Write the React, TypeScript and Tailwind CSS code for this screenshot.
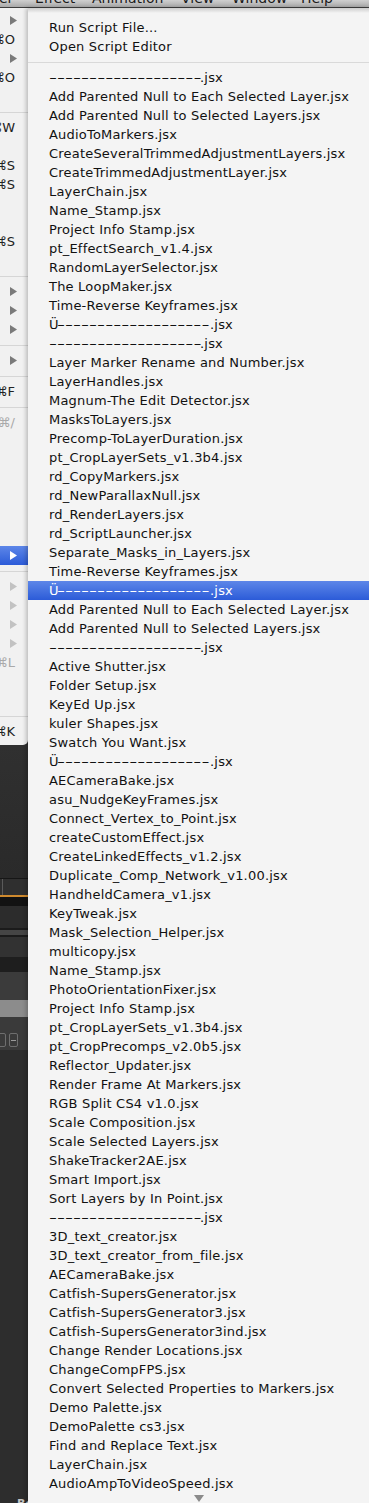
import React from 'react';

const scripts: string[] = [
  '-------------------.jsx',
  'Add Parented Null to Each Selected Layer.jsx',
  'Add Parented Null to Selected Layers.jsx',
  'AudioToMarkers.jsx',
  'CreateSeveralTrimmedAdjustmentLayers.jsx',
  'CreateTrimmedAdjustmentLayer.jsx',
  'LayerChain.jsx',
  'Name_Stamp.jsx',
  'Project Info Stamp.jsx',
  'pt_EffectSearch_v1.4.jsx',
  'RandomLayerSelector.jsx',
  'The LoopMaker.jsx',
  'Time-Reverse Keyframes.jsx',
  'Ü-------------------.jsx',
  '-------------------.jsx',
  'Layer Marker Rename and Number.jsx',
  'LayerHandles.jsx',
  'Magnum-The Edit Detector.jsx',
  'MasksToLayers.jsx',
  'Precomp-ToLayerDuration.jsx',
  'pt_CropLayerSets_v1.3b4.jsx',
  'rd_CopyMarkers.jsx',
  'rd_NewParallaxNull.jsx',
  'rd_RenderLayers.jsx',
  'rd_ScriptLauncher.jsx',
  'Separate_Masks_in_Layers.jsx',
  'Time-Reverse Keyframes.jsx',
  'Ü-------------------.jsx',
  'Add Parented Null to Each Selected Layer.jsx',
  'Add Parented Null to Selected Layers.jsx',
  '-------------------.jsx',
  'Active Shutter.jsx',
  'Folder Setup.jsx',
  'KeyEd Up.jsx',
  'kuler Shapes.jsx',
  'Swatch You Want.jsx',
  'Ü-------------------.jsx',
  'AECameraBake.jsx',
  'asu_NudgeKeyFrames.jsx',
  'Connect_Vertex_to_Point.jsx',
  'createCustomEffect.jsx',
  'CreateLinkedEffects_v1.2.jsx',
  'Duplicate_Comp_Network_v1.00.jsx',
  'HandheldCamera_v1.jsx',
  'KeyTweak.jsx',
  'Mask_Selection_Helper.jsx',
  'multicopy.jsx',
  'Name_Stamp.jsx',
  'PhotoOrientationFixer.jsx',
  'Project Info Stamp.jsx',
  'pt_CropLayerSets_v1.3b4.jsx',
  'pt_CropPrecomps_v2.0b5.jsx',
  'Reflector_Updater.jsx',
  'Render Frame At Markers.jsx',
  'RGB Split CS4 v1.0.jsx',
  'Scale Composition.jsx',
  'Scale Selected Layers.jsx',
  'ShakeTracker2AE.jsx',
  'Smart Import.jsx',
  'Sort Layers by In Point.jsx',
  '-------------------.jsx',
  '3D_text_creator.jsx',
  '3D_text_creator_from_file.jsx',
  'AECameraBake.jsx',
  'Catfish-SupersGenerator.jsx',
  'Catfish-SupersGenerator3.jsx',
  'Catfish-SupersGenerator3ind.jsx',
  'Change Render Locations.jsx',
  'ChangeCompFPS.jsx',
  'Convert Selected Properties to Markers.jsx',
  'Demo Palette.jsx',
  'DemoPalette cs3.jsx',
  'Find and Replace Text.jsx',
  'LayerChain.jsx',
  'AudioAmpToVideoSpeed.jsx',
];

const selected = 27;

type ParentRow =
  | { kind: 'arrow'; state?: 'off' | 'on' }
  | { kind: 'key'; label: string; off?: boolean }
  | { kind: 'empty' }
  | { kind: 'sep' };

const E: ParentRow = { kind: 'empty' };
const S: ParentRow = { kind: 'sep' };

const parentRows: ParentRow[] = [
  { kind: 'arrow' },
  { kind: 'key', label: '⌘O' },
  { kind: 'arrow' },
  { kind: 'key', label: '⌘O' },
  E,
  S,
  { kind: 'key', label: '⌘W' },
  E,
  { kind: 'key', label: '⌘S' },
  { kind: 'key', label: '⌘S' },
  E,
  E,
  { kind: 'key', label: '⌘S' },
  E,
  S,
  { kind: 'arrow' },
  { kind: 'arrow' },
  { kind: 'arrow' },
  S,
  { kind: 'arrow' },
  S,
  { kind: 'key', label: '⌘F' },
  S,
  { kind: 'key', label: '⌘/', off: true },
  E,
  E,
  E,
  E,
  E,
  E,
  { kind: 'arrow', state: 'on' },
  S,
  { kind: 'arrow', state: 'off' },
  { kind: 'arrow', state: 'off' },
  { kind: 'arrow', state: 'off' },
  { kind: 'arrow', state: 'off' },
  { kind: 'key', label: '⌘L', off: true },
  E,
  E,
  S,
  { kind: 'key', label: '⌘K' },
];

function Tri({ color }: { color: string }) {
  return (
    <svg width="7" height="9" viewBox="0 0 7 9">
      <path d="M0 0L7 4.5L0 9Z" fill={color} />
    </svg>
  );
}

function ScriptLabel({ name }: { name: string }) {
  // runs of dashes are stretched, like the wide Lucida Grande hyphens of the original
  const m = name.match(/^(Ü?)(-{5,})(\.jsx)$/);
  if (!m) return <span>{name}</span>;
  return (
    <span className="flex items-center">
      {m[1] && <span className="w-[8px]">{m[1]}</span>}
      <span className={`inline-block overflow-visible ${m[1] ? 'w-[153px]' : 'w-[151px]'}`}>
        <span className="inline-block origin-left scale-x-[1.71] tracking-normal">{m[2]}</span>
      </span>
      <span>{m[3]}</span>
    </span>
  );
}

function ParentMenu() {
  return (
    <div className="bg-[#f1f1f1] pt-[3px] pb-[4px] rounded-br-[5px] text-[13px] text-[#222]">
      {parentRows.map((r, i) => {
        if (r.kind === 'sep')
          return (
            <div key={i} className="h-[12px] flex items-center">
              <div className="h-px w-full bg-[#d6d6d6]" />
            </div>
          );
        if (r.kind === 'empty') return <div key={i} className="h-[19px]" />;
        if (r.kind === 'arrow')
          return (
            <div
              key={i}
              className={`h-[19px] flex items-center justify-end pr-[11px] ${
                r.state === 'on' ? 'bg-gradient-to-b from-[#5d86e8] to-[#2c5bd8]' : ''
              }`}
            >
              <Tri color={r.state === 'on' ? '#ffffff' : r.state === 'off' ? '#c2c2c2' : '#7a7a7a'} />
            </div>
          );
        return (
          <div
            key={i}
            className={`h-[19px] flex items-center justify-end pr-[13px] whitespace-nowrap ${
              r.off ? 'text-[#a9a9a9]' : ''
            }`}
          >
            {r.label}
          </div>
        );
      })}
    </div>
  );
}

function AppPanels() {
  return (
    <div className="flex-1 flex flex-col bg-[#2d2d2d]">
      <div className="h-[133px] bg-gradient-to-b from-[#303030] to-[#2a2a2a]" />
      <div className="h-[17px] bg-[#2f2f2f] border-t border-[#161616] pl-[2px]">
        <div className="h-full border-l border-[#5a5a5a]" />
      </div>
      <div className="h-[2px] bg-[#cf8a2e]" />
      <div className="h-[9px] bg-[#121212]" />
      <div className="h-[22px] bg-[#2c2c2c]" />
      <div className="h-[2px] bg-[#1b1b1b]" />
      <div className="h-[5px] bg-[#454545]" />
      <div className="h-[2px] bg-[#1b1b1b]" />
      <div className="h-[20px] bg-[#323232]" />
      <div className="h-[15px] bg-[#1e1e1e]" />
      <div className="h-[28px] bg-[#3b3b3b]" />
      <div className="h-[17px] bg-[#8c8c8c]" />
      <div className="h-[33px] bg-[#3a3a3a] flex items-end pb-[3px] gap-[3px] -ml-[2px]">
        <div className="w-[8px] h-[14px] rounded-[2px] border border-[#6e6e6e]" />
        <div className="w-[9px] h-[14px] rounded-[2px] border border-[#6e6e6e] flex items-center justify-center">
          <div className="w-[5px] h-px bg-[#9a9a9a]" />
        </div>
      </div>
      <div className="flex-1 flex flex-col justify-end overflow-hidden">
        <div className="h-[5px] overflow-hidden pl-[17px]">
          <div className="text-[11px] leading-[11px] font-bold text-[#c4c4c4]">Bo</div>
        </div>
      </div>
    </div>
  );
}

function MenuBar() {
  const labels: [string, string][] = [
    ['er', 'w-[36px]'],
    ['Effect', 'w-[57px]'],
    ['Animation', 'w-[89px]'],
    ['View', 'w-[51px]'],
    ['Window', 'w-[69px]'],
    ['Help', 'w-[60px]'],
  ];
  return (
    <div className="h-[8px] shrink-0 overflow-hidden bg-gradient-to-b from-[#cfcfcf] to-[#a9a9a9] border-b border-[#3e3e3e]">
      <div className="flex -mt-[9px] text-[14px] leading-[14px] text-[#1a1a1a] whitespace-nowrap -ml-[1px]">
        {labels.map(([t, w]) => (
          <span key={t} className={`${w} shrink-0`}>
            {t}
          </span>
        ))}
      </div>
    </div>
  );
}

export default function App() {
  return (
    <div
      className="w-[369px] h-[1503px] overflow-hidden flex flex-col bg-[#2d2d2d]"
      style={{ fontFamily: '"DejaVu Sans", "Liberation Sans", sans-serif' }}
    >
      <MenuBar />
      <div className="flex flex-1 min-h-0">
        <div className="w-[28px] shrink-0 flex flex-col">
          <ParentMenu />
          <AppPanels />
        </div>
        <div className="flex-1 relative z-10 bg-[#f4f4f4] shadow-[-2px_0_4px_rgba(0,0,0,0.22)] flex flex-col text-[13px] tracking-[0.2px] text-[#111]">
          <div className="h-[5px] bg-gradient-to-b from-[#cdcdcd] to-[#f4f4f4]" />
          <div className="pt-[5px]">
            <div className="h-[19px] flex items-center pl-[21px]">Run Script File...</div>
            <div className="h-[19px] flex items-center pl-[21px]">Open Script Editor</div>
          </div>
          <div className="h-[12px] flex items-center">
            <div className="h-px w-full bg-[#d9d9d9]" />
          </div>
          {scripts.map((s, i) => (
            <div
              key={i}
              className={`h-[19px] shrink-0 flex items-center pl-[21px] whitespace-nowrap ${
                i === selected ? 'bg-gradient-to-b from-[#5d86e8] to-[#2c5bd8] text-white' : ''
              }`}
            >
              <ScriptLabel name={s} />
            </div>
          ))}
          <div className="h-[10px] shrink-0 flex items-center justify-center">
            <svg width="10" height="7" viewBox="0 0 10 7">
              <path d="M0 0H10L5 7Z" fill="#8a8a8a" />
            </svg>
          </div>
        </div>
      </div>
    </div>
  );
}
